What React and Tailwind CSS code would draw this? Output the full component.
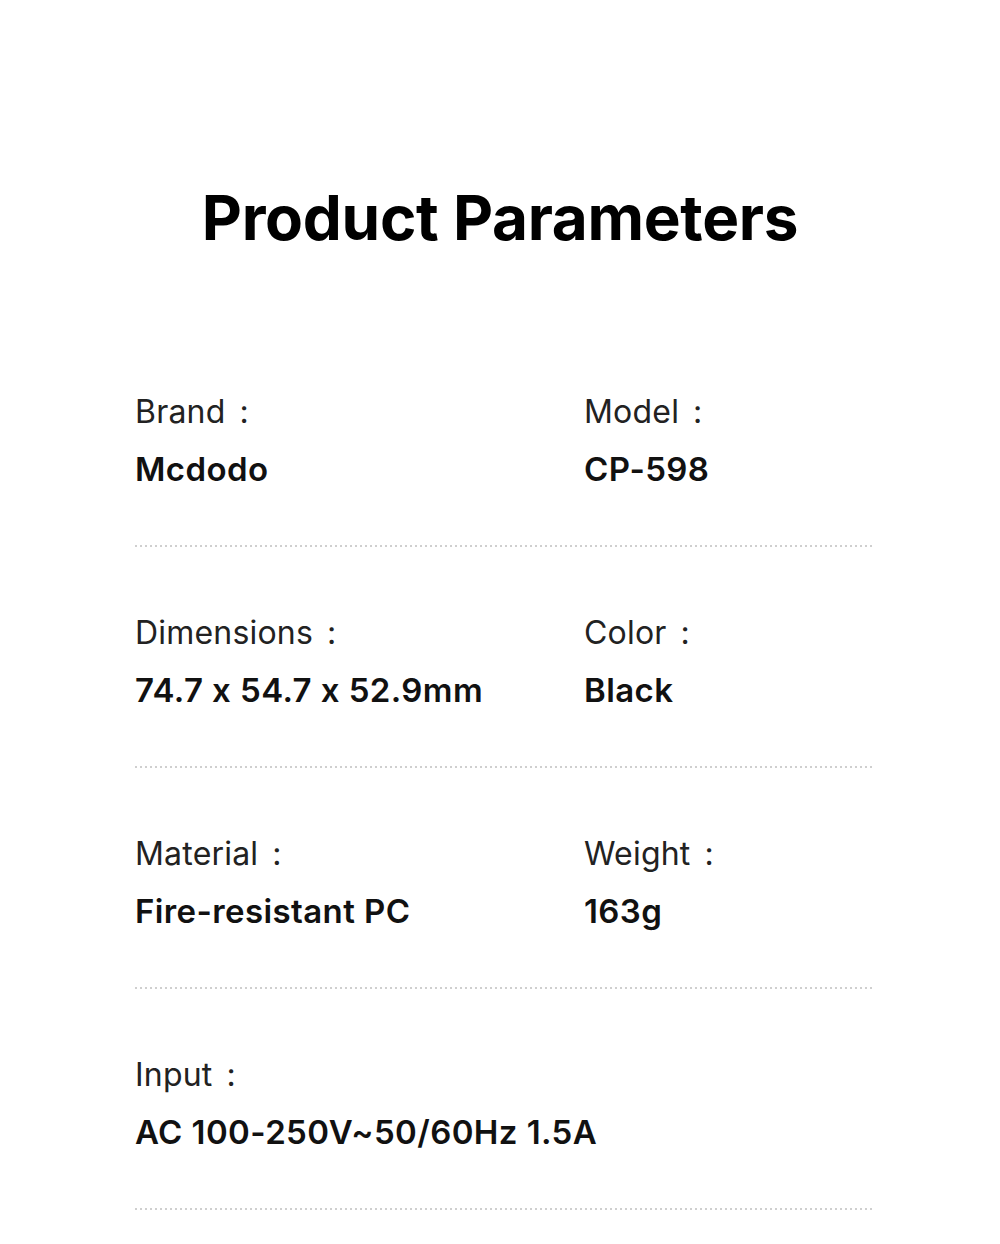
export default function App() {
  const rows = [
    [["Brand", "Mcdodo"], ["Model", "CP-598"]],
    [["Dimensions", "74.7 x 54.7 x 52.9mm"], ["Color", "Black"]],
    [["Material", "Fire-resistant PC"], ["Weight", "163g"]],
    [["Input", "AC 100-250V~50/60Hz 1.5A"]],
  ];
  return (
    <div
      className="w-[1000px] h-[1244px] bg-white text-[#1a1a1a]"
      style={{ fontFamily: "Inter, 'Noto Sans', sans-serif", fontFeatureSettings: "'calt' 0" }}
    >
      <div className="pt-[178px] h-[258px] text-center text-[62px] leading-[80px] font-bold text-black tracking-[-0.3px]">
        Product Parameters
      </div>
      <div className="pt-[134px] pl-[135px] w-[872px]">
        {rows.map((row, i) => (
          <div key={i} className="mb-[66px]">
            <div className="grid grid-cols-[449px_1fr]">
              {row.map(([k, v]) => (
                <div key={k} className="flex flex-col gap-[17px] whitespace-nowrap">
                  <div className="text-[32px] leading-[40px] text-[#222] tracking-[0.2px]">
                    {k}
                    <span className="ml-[14px]">:</span>
                  </div>
                  <div className="text-[33px] leading-[40px] font-semibold text-[#111] tracking-[0.4px]">{v}</div>
                </div>
              ))}
            </div>
            <div
              className="mt-[56px] h-[2px] w-full"
              style={{ backgroundImage: "repeating-linear-gradient(to right, #cfcfcf 0 2px, transparent 2px 5px)" }}
            />
          </div>
        ))}
      </div>
    </div>
  );
}
